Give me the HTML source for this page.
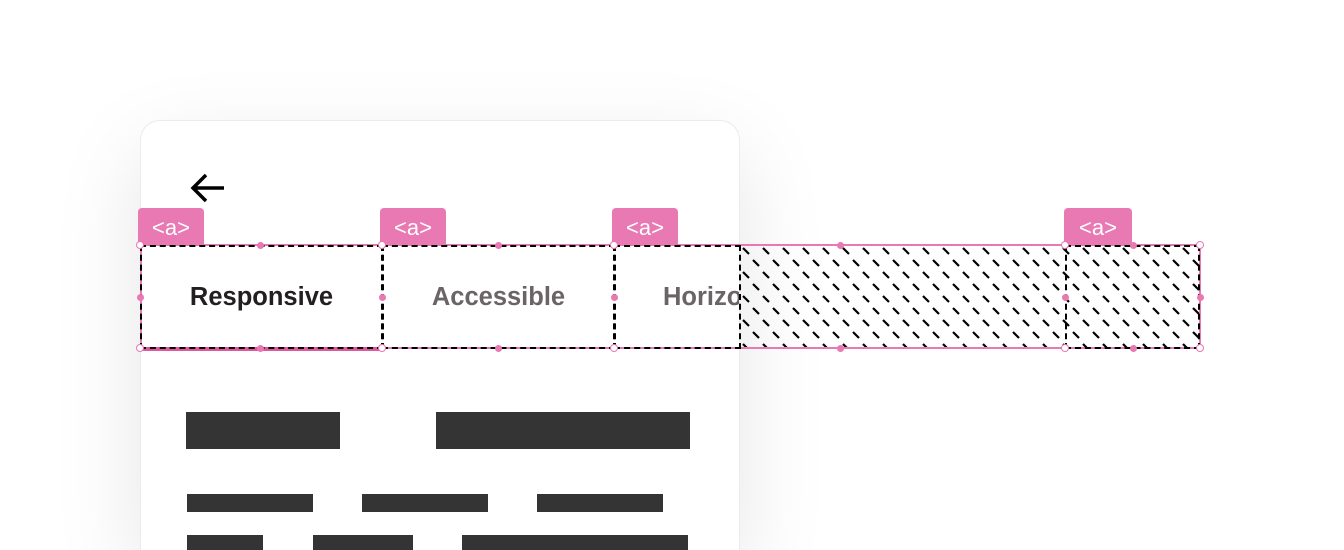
<!DOCTYPE html>
<html><head><meta charset="utf-8"><style>
html,body{margin:0;padding:0;background:#fff;width:1344px;height:550px;overflow:hidden;position:relative;font-family:"Liberation Sans",sans-serif}
.card{position:absolute;left:140px;top:120px;width:600px;height:430px;background:#fff;border:1px solid #ececec;border-bottom:none;border-radius:20px 20px 0 0;box-shadow:0 30px 90px rgba(0,0,0,0.10);box-sizing:border-box}
.bar{position:absolute;background:#343434}
.tab{position:absolute;top:245px;height:104px;display:flex;align-items:center;justify-content:center;font-weight:bold;font-size:25.5px;box-sizing:border-box;border:2px dashed #000}
.lab{position:absolute;top:208px;height:37px;width:66px;background:#e879b2;border-radius:4px 4px 0 0;color:#fff;font-size:22px;text-align:center;line-height:40px}
.dot{position:absolute;width:7px;height:7px;border-radius:50%;background:#e879b2;margin:-3.5px 0 0 -3.5px}
.ring{position:absolute;width:6px;height:6px;border-radius:50%;background:#fff;border:1.5px solid #e879b2;margin:-4.5px 0 0 -4.5px}
</style></head><body>
<div class="card"></div>
<svg style="position:absolute;left:188px;top:172px" width="40" height="32"><path d="M5 16H36M18 3L5 16L18 29" stroke="#000" stroke-width="3.5" fill="none"/></svg>

<div class="bar" style="left:186px;top:412px;width:154px;height:37px"></div>
<div class="bar" style="left:436px;top:412px;width:254px;height:37px"></div>
<div class="bar" style="left:187px;top:494px;width:126px;height:18px"></div>
<div class="bar" style="left:362px;top:494px;width:126px;height:18px"></div>
<div class="bar" style="left:537px;top:494px;width:126px;height:18px"></div>
<div class="bar" style="left:187px;top:535px;width:76px;height:20px"></div>
<div class="bar" style="left:313px;top:535px;width:100px;height:20px"></div>
<div class="bar" style="left:462px;top:535px;width:226px;height:20px"></div>

<svg style="position:absolute;left:741px;top:246px" width="459" height="102">
<defs><pattern id="h" width="20" height="24" patternUnits="userSpaceOnUse"><path d="M2 2L8 8M12 14L18 20" stroke="#000" stroke-width="2.2"/></pattern></defs>
<rect width="459" height="102" fill="url(#h)"/></svg>

<div style="position:absolute;left:140px;top:244px;width:1061px;height:105px;border:2px solid #e879b2;box-sizing:border-box"></div>
<div style="position:absolute;left:140px;top:347px;width:242px;height:4px;background:#e0579d"></div>

<div class="tab" style="left:140px;width:243px;color:#231f20">Responsive</div>
<div class="tab" style="left:382px;width:233px;color:#6b6466">Accessible</div>
<div class="tab" style="left:614px;width:127px;color:#6b6466;justify-content:flex-start;padding-left:47px;overflow:hidden;white-space:nowrap">Horizontal</div>
<div class="tab" style="left:1065px;width:135px"></div>

<div class="lab" style="left:138px">&lt;a&gt;</div>
<div class="lab" style="left:380px">&lt;a&gt;</div>
<div class="lab" style="left:612px">&lt;a&gt;</div>
<div class="lab" style="left:1064px;width:68px">&lt;a&gt;</div>

<div class="ring" style="left:140px;top:245px"></div><div class="ring" style="left:140px;top:348px"></div>
<div class="ring" style="left:382px;top:245px"></div><div class="ring" style="left:382px;top:348px"></div>
<div class="ring" style="left:614px;top:245px"></div><div class="ring" style="left:614px;top:348px"></div>
<div class="ring" style="left:1065px;top:245px"></div><div class="ring" style="left:1065px;top:348px"></div>
<div class="ring" style="left:1200px;top:245px"></div><div class="ring" style="left:1200px;top:348px"></div>
<div class="dot" style="left:260px;top:245px"></div><div class="dot" style="left:260px;top:348px"></div>
<div class="dot" style="left:498px;top:245px"></div><div class="dot" style="left:498px;top:348px"></div>
<div class="dot" style="left:840px;top:245px"></div><div class="dot" style="left:840px;top:348px"></div>
<div class="dot" style="left:1133px;top:245px"></div><div class="dot" style="left:1133px;top:348px"></div>
<div class="dot" style="left:140px;top:297px"></div><div class="dot" style="left:382px;top:297px"></div>
<div class="dot" style="left:614px;top:297px"></div><div class="dot" style="left:1065px;top:297px"></div>
<div class="dot" style="left:1200px;top:297px"></div>
</body></html>
